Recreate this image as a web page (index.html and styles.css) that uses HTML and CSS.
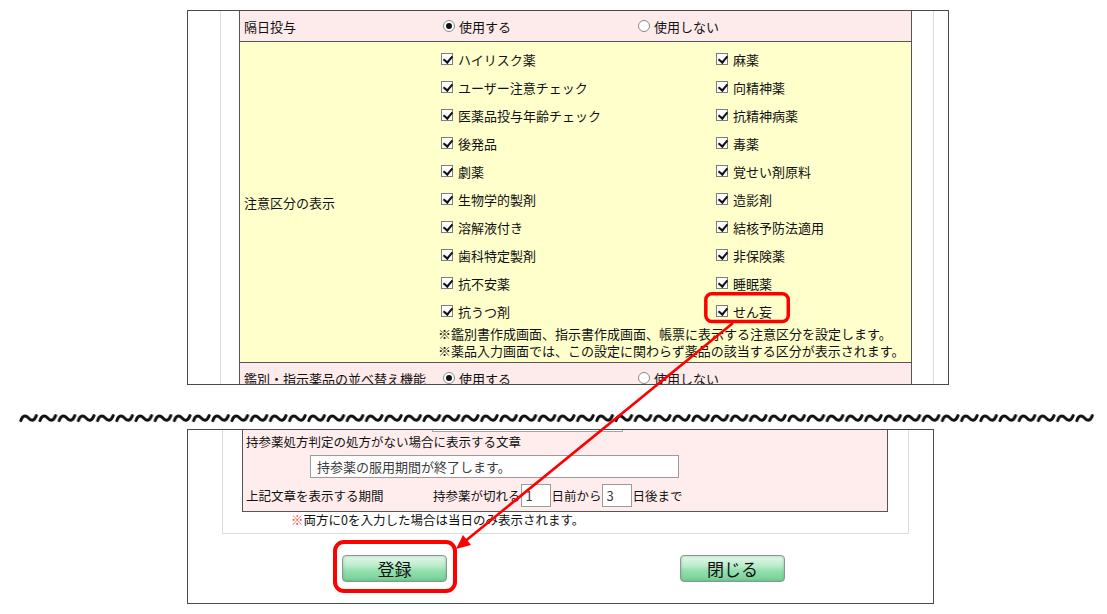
FILE: index.html
```html
<!DOCTYPE html>
<html lang="ja">
<head>
    <meta charset="UTF-8">
    <meta name="viewport" content="width=device-width, initial-scale=1.0">
    <title>注意区分の表示</title>
    <link rel="stylesheet" href="styles.css">
</head>
<body>
<div class="page">

    <!-- upper capture: settings table -->
    <div class="shot shot-top">
        <div class="frame">
            <div class="settings">
                <div class="row pink">
                    <div class="label">隔日投与</div>
                    <div class="value radios">
                        <span class="opt first"><span class="rd on"></span>使用する</span>
                        <span class="opt"><span class="rd"></span>使用しない</span>
                    </div>
                </div>
                <div class="row yellow">
                    <div class="label">注意区分の表示</div>
                    <div class="value">
                        <div class="checks">
                            <span class="chk"><span class="cb"></span>ハイリスク薬</span>
                            <span class="chk"><span class="cb"></span>麻薬</span>
                            <span class="chk"><span class="cb"></span>ユーザー注意チェック</span>
                            <span class="chk"><span class="cb"></span>向精神薬</span>
                            <span class="chk"><span class="cb"></span>医薬品投与年齢チェック</span>
                            <span class="chk"><span class="cb"></span>抗精神病薬</span>
                            <span class="chk"><span class="cb"></span>後発品</span>
                            <span class="chk"><span class="cb"></span>毒薬</span>
                            <span class="chk"><span class="cb"></span>劇薬</span>
                            <span class="chk"><span class="cb"></span>覚せい剤原料</span>
                            <span class="chk"><span class="cb"></span>生物学的製剤</span>
                            <span class="chk"><span class="cb"></span>造影剤</span>
                            <span class="chk"><span class="cb"></span>溶解液付き</span>
                            <span class="chk"><span class="cb"></span>結核予防法適用</span>
                            <span class="chk"><span class="cb"></span>歯科特定製剤</span>
                            <span class="chk"><span class="cb"></span>非保険薬</span>
                            <span class="chk"><span class="cb"></span>抗不安薬</span>
                            <span class="chk"><span class="cb"></span>睡眠薬</span>
                            <span class="chk"><span class="cb"></span>抗うつ剤</span>
                            <span class="chk"><span class="cb"></span>せん妄</span>
                        </div>
                        <p class="note">※鑑別書作成画面、指示書作成画面、帳票に表示する注意区分を設定します。<br>※薬品入力画面では、この設定に関わらず薬品の該当する区分が表示されます。</p>
                    </div>
                </div>
                <div class="row pink">
                    <div class="label">鑑別・指示薬品の並べ替え機能</div>
                    <div class="value radios">
                        <span class="opt first"><span class="rd on"></span>使用する</span>
                        <span class="opt"><span class="rd"></span>使用しない</span>
                    </div>
                </div>
            </div>
        </div>
    </div>

    <!-- cut mark between the two captures -->
    <div class="wave">
        <svg width="1107" height="44" viewBox="0 0 1107 44">
            <defs>
                <pattern id="tilde" x="19" y="25" width="19.2" height="16" patternUnits="userSpaceOnUse">
                    <path d="M1.8 10.6 C3.4 5.4 6.4 4.6 9.2 7.8 S15 11.6 17.4 5.6" fill="none" stroke="#111" stroke-width="3" stroke-linecap="round"/>
                </pattern>
            </defs>
            <rect x="19" y="25" width="1075" height="16" fill="url(#tilde)"/>
        </svg>
    </div>

    <!-- lower capture: carry-in medicine message + buttons -->
    <div class="shot shot-bottom">
        <div class="frame-b">
            <div class="sub">
                <div class="cut"><span class="cut-input"></span></div>
                <div class="line-a">持参薬処方判定の処方がない場合に表示する文章</div>
                <div class="line-b"><input class="txt msg" type="text" value="持参薬の服用期間が終了します。"></div>
                <div class="line-c">
                    <span class="sub-label">上記文章を表示する期間</span>
                    <span>持参薬が切れる</span><input class="txt num" type="text" value="1"><span>日前から</span><input class="txt num" type="text" value="3"><span>日後まで</span>
                </div>
            </div>
            <p class="sub-note"><span class="mark">※</span>両方に0を入力した場合は当日のみ表示されます。</p>
        </div>
        <div class="buttons">
            <button class="btn">登録</button>
            <button class="btn">閉じる</button>
        </div>
    </div>

    <!-- red annotations -->
    <svg class="marks" width="1107" height="614" viewBox="0 0 1107 614">
        <rect x="705.8" y="293.8" width="82.5" height="27.6" rx="6" fill="none" stroke="#f00" stroke-width="3.5"/>
        <rect x="335" y="542" width="120" height="49" rx="9" fill="none" stroke="#f00" stroke-width="4"/>
        <line x1="733" y1="323" x2="466" y2="540.5" stroke="#f00" stroke-width="2.6"/>
        <polygon points="456,549 471,545 463,535" fill="#f00"/>
    </svg>
</div>
</body>
</html>
```

FILE: styles.css
```css
* {
    box-sizing: border-box;
}

body {
    margin: 0;
    background-color: #fff;
    color: #111;
    font-family: "Noto Sans CJK JP", "Noto Sans", sans-serif;
}

.page {
    position: relative;
    width: 1107px;
    height: 614px;
    padding-top: 10px;
    overflow: hidden;
}

/* capture frames */
.shot {
    margin-left: 187px;
    border: 1px solid #4a4a4a;
    background-color: #fff;
    overflow: hidden;
}

.shot-top {
    width: 762px;
    height: 375px;
}

.shot-bottom {
    width: 747px;
    height: 175px;
}

.frame {
    width: 714px;
    height: 100%;
    margin-left: 32px;
    padding: 0 21px 0 18px;
    border-left: 1px solid #dcdcdc;
    border-right: 1px solid #dcdcdc;
}

/* settings table */
.settings {
    width: 673px;
    border-left: 1px solid #555;
    border-right: 1px solid #555;
    font-size: 13px;
    line-height: 17px;
}

.row {
    display: flex;
    align-items: center;
    border-bottom: 1px solid #555;
}

.row.pink {
    height: 31px;
    background-color: #fdeaea;
}

.row.yellow {
    height: 321px;
    padding: 3px 0;
    background-color: #ffffcc;
}

.label {
    width: 197px;
    padding-left: 4px;
    white-space: nowrap;
}

.value {
    flex: 1;
}

.radios {
    display: flex;
    align-items: center;
    padding-left: 6px;
}

.opt {
    display: inline-flex;
    align-items: center;
}

.opt.first {
    width: 195px;
}

.rd {
    position: relative;
    width: 12px;
    height: 12px;
    margin-right: 4px;
    border: 1px solid #8a8a8a;
    border-radius: 50%;
    background-color: #fff;
}

.rd.on::after {
    content: "";
    position: absolute;
    left: 2px;
    top: 2px;
    width: 6px;
    height: 6px;
    border-radius: 50%;
    background-color: #111;
}

.checks {
    display: grid;
    grid-template-columns: 275px 1fr;
    grid-auto-rows: 28px;
    padding-left: 4px;
}

.chk {
    display: flex;
    align-items: center;
    white-space: nowrap;
}

.cb {
    position: relative;
    flex: none;
    width: 12px;
    height: 12px;
    margin-right: 5px;
    border: 1px solid #7c7c7c;
    background-color: #fff;
}

.cb::after {
    content: "";
    position: absolute;
    left: 3px;
    top: 0;
    width: 4px;
    height: 7px;
    border: solid #111;
    border-width: 0 2px 2px 0;
    transform: rotate(40deg);
}

.note {
    margin: 0 0 0 1px;
    line-height: 17px;
    white-space: nowrap;
}

/* wavy cut line */
.wave {
    height: 44px;
}

.wave svg {
    display: block;
}

/* lower capture */
.frame-b {
    width: 687px;
    margin-left: 34px;
    padding: 0 20px 5px 19px;
    border: 1px solid #dcdcdc;
    border-top: 0;
    font-size: 12.5px;
}

.sub {
    width: 646px;
    border: 1px solid #555;
    border-top: 0;
    background-color: #ffeded;
}

.cut {
    height: 2px;
}

.cut-input {
    display: block;
    width: 191px;
    height: 2px;
    margin-left: 189px;
    border: 1px solid #a5a5a5;
    border-top: 0;
    background-color: #fff;
}

.line-a {
    height: 20px;
    padding-left: 3px;
    line-height: 20px;
}

.line-b {
    display: flex;
    align-items: center;
    height: 28px;
}

.line-c {
    display: flex;
    align-items: center;
    height: 31px;
    white-space: nowrap;
}

.sub-label {
    width: 190px;
    padding-left: 3px;
}

.txt {
    height: 23px;
    border: 1px solid #9b9b9b;
    background-color: #fff;
    color: #3c3c3c;
    font-family: "Noto Sans CJK JP", sans-serif;
    font-size: 13px;
    outline: none;
}

.msg {
    width: 369px;
    margin-left: 67px;
    padding: 0 0 0 6px;
}

.num {
    width: 30px;
    margin: 0 1px 0 0;
    padding: 0 0 0 4px;
}

.sub-note {
    margin: 0;
    height: 16px;
    padding-left: 49px;
    line-height: 16px;
    white-space: nowrap;
}

.mark {
    color: #ff3b3b;
}

.buttons {
    display: flex;
    gap: 233px;
    margin-top: 21px;
    padding-left: 154px;
}

.btn {
    width: 105px;
    height: 27px;
    padding: 0;
    border: 1px solid #8a978f;
    border-radius: 4px;
    background: linear-gradient(to bottom, #e6f8ec 0%, #b9ecca 40%, #93dfad 60%, #73d196 100%);
    box-shadow: inset 0 0 3px rgba(40, 120, 70, 0.35);
    color: #111;
    font-family: "Noto Sans CJK JP", sans-serif;
    font-size: 17px;
    line-height: 25px;
    cursor: pointer;
}

/* annotations drawn over the captures */
.marks {
    position: absolute;
    left: 0;
    top: 0;
    pointer-events: none;
}
```
